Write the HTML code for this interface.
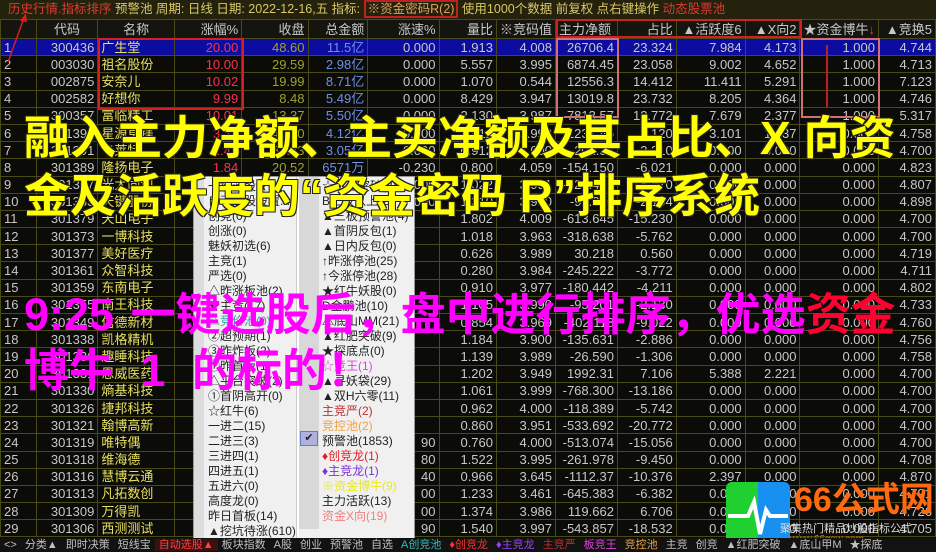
<!DOCTYPE html>
<html><head><meta charset="utf-8">
<style>
*{margin:0;padding:0;box-sizing:border-box}
body{width:936px;height:552px;overflow:hidden;background:#0b0b08;font-family:"Liberation Sans","Noto Sans CJK SC",sans-serif;position:relative}
.top{position:absolute;left:0;top:0;width:936px;height:19px;background:#24220c;color:#d8c868;font-size:12.5px;line-height:19px;white-space:nowrap;padding-left:8px}
.top .r{color:#e03a30}
table{position:absolute;left:0;top:19px;border-collapse:collapse;table-layout:fixed;font-size:13px;color:#c8c8c8}
td{height:17.2px;border:1px solid #4a4a18;padding:0 3px;text-align:right;white-space:nowrap;overflow:hidden;line-height:15px}
tr.h td{height:19px;background:#151510;color:#c8c8c8}
td.i{text-align:left;color:#c8c8c8}
td.n{text-align:left;color:#e8e060}
td.c{text-align:center}
tr.sel td{background:#0c0ca0}
.red{color:#ff3050}.yl{color:#a0a030}.bl{color:#7090e8}.cy{color:#30d0e0}
.menu{position:absolute;left:193px;top:176px;width:222px;height:364px;background:#f0f0f0;border:1px solid #999;font-size:12px;color:#222}
.menu .ls{position:absolute;left:0;top:0;width:10px;height:100%;background:#ddd}
.menu .div{position:absolute;left:102px;top:0;width:3px;height:100%;background:#fff;border-left:1px solid #ccc}
.menu .rs{position:absolute;left:105px;top:0;width:20px;height:352px;background:#d8d8d8}
.menu .col{position:absolute;top:2px;line-height:15px}
.ov{position:absolute;left:24px;font-weight:bold;white-space:nowrap;text-shadow:-1px -1px 0 #222,1px -1px 0 #222,-1px 1px 0 #222,1px 1px 0 #222}
.bot{position:absolute;left:0;top:538px;width:936px;height:14px;background:#121210;color:#c0c0c0;font-size:11px;line-height:14px;white-space:nowrap}
.bot span{padding:0 4px}
.box{position:absolute;border:2px solid #d02020}
</style></head><body>
<div class="top"><span class="r">历史行情.指标排序</span> 预警池 周期: 日线 日期: 2022-12-16,五 指标: <span style="color:#e0a060;border:2px solid #c02020;padding:0 2px">※资金密码R(2)</span> 使用1000个数据 前复权 点右键操作 <span class="r">动态股票池</span></div>
<table>
<colgroup><col style="width:36px"><col style="width:62px"><col style="width:77px"><col style="width:68px"><col style="width:67px"><col style="width:60px"><col style="width:72px"><col style="width:58px"><col style="width:56px"><col style="width:62px"><col style="width:59px"><col style="width:69px"><col style="width:55px"><col style="width:78px"><col style="width:57px"></colgroup>
<tr class="h"><td></td><td class="c">代码</td><td class="c">名称</td><td>涨幅%</td><td>收盘</td><td>总金额</td><td>涨速%</td><td>量比</td><td>※竞码值</td><td style="text-align:left">主力净额</td><td>占比</td><td>▲活跃度6</td><td>▲X向2</td><td>★资金博牛<span class="red">↓</span></td><td>▲竞换5</td></tr>
<tr class="sel"><td class="i">1</td><td>300436</td><td class="n cy">广生堂</td><td class="red">20.00</td><td class="yl">48.60</td><td class="bl">11.5亿</td><td>0.000</td><td>1.913</td><td>4.008</td><td>26706.4</td><td>23.324</td><td>7.984</td><td>4.173</td><td>1.000</td><td>4.744</td></tr>
<tr><td class="i">2</td><td>003030</td><td class="n">祖名股份</td><td class="red">10.00</td><td class="yl">29.59</td><td class="bl">2.98亿</td><td>0.000</td><td>5.557</td><td>3.995</td><td>6874.45</td><td>23.058</td><td>9.002</td><td>4.652</td><td>1.000</td><td>4.713</td></tr>
<tr><td class="i">3</td><td>002875</td><td class="n cy">安奈儿</td><td class="red">10.02</td><td class="yl">19.99</td><td class="bl">8.71亿</td><td>0.000</td><td>1.070</td><td>0.544</td><td>12556.3</td><td>14.412</td><td>11.411</td><td>5.291</td><td>1.000</td><td>7.123</td></tr>
<tr><td class="i">4</td><td>002582</td><td class="n">好想你</td><td class="red">9.99</td><td class="yl">8.48</td><td class="bl">5.49亿</td><td>0.000</td><td>8.429</td><td>3.947</td><td>13019.8</td><td>23.732</td><td>8.205</td><td>4.364</td><td>1.000</td><td>4.746</td></tr>
<tr><td class="i">5</td><td>300357</td><td class="n">富临精工</td><td class="red">10.01</td><td class="yl">13.37</td><td class="bl">5.50亿</td><td>0.000</td><td>2.130</td><td>3.987</td><td>7813.57</td><td>12.772</td><td>7.679</td><td>2.377</td><td>1.000</td><td>5.317</td></tr>
<tr><td class="i">6</td><td>301398</td><td class="n">星源卓镁</td><td class="red">3.21</td><td class="yl">40.20</td><td class="bl">4.12亿</td><td>0.000</td><td>1.412</td><td>3.992</td><td>1237.45</td><td>5.120</td><td>3.101</td><td>1.237</td><td>0.000</td><td>4.758</td></tr>
<tr><td class="i">7</td><td>301391</td><td class="n">卡莱特</td><td class="red">2.45</td><td class="yl">82.33</td><td class="bl">3.05亿</td><td>0.000</td><td>0.912</td><td>4.000</td><td>-201.37</td><td>-3.210</td><td>0.000</td><td>0.000</td><td>0.000</td><td>4.700</td></tr>
<tr><td class="i">8</td><td>301389</td><td class="n">隆扬电子</td><td class="red">1.84</td><td class="yl">20.52</td><td class="bl">6571万</td><td>-0.230</td><td>0.800</td><td>4.059</td><td>-154.150</td><td>-6.021</td><td>0.000</td><td>0.000</td><td>0.000</td><td>4.823</td></tr>
<tr><td class="i">9</td><td>301387</td><td class="n">光大同创</td><td class="red">1.20</td><td class="yl">52.10</td><td class="bl">1.02亿</td><td>0.000</td><td>1.022</td><td>3.991</td><td>-322.451</td><td>-8.470</td><td>0.000</td><td>0.000</td><td>0.000</td><td>4.807</td></tr>
<tr><td class="i">10</td><td>301383</td><td class="n">天键股份</td><td class="red">0.95</td><td class="yl">35.61</td><td class="bl">1.31亿</td><td>0.000</td><td>1.310</td><td>3.980</td><td>-98.330</td><td>-2.104</td><td>0.000</td><td>0.000</td><td>0.000</td><td>4.898</td></tr>
<tr><td class="i">11</td><td>301379</td><td class="n">天山电子</td><td></td><td></td><td></td><td></td><td>1.802</td><td>4.009</td><td>-613.645</td><td>-15.230</td><td>0.000</td><td>0.000</td><td>0.000</td><td>4.700</td></tr>
<tr><td class="i">12</td><td>301373</td><td class="n">一博科技</td><td></td><td></td><td></td><td></td><td>1.018</td><td>3.963</td><td>-318.638</td><td>-5.762</td><td>0.000</td><td>0.000</td><td>0.000</td><td>4.700</td></tr>
<tr><td class="i">13</td><td>301377</td><td class="n">美好医疗</td><td></td><td></td><td></td><td></td><td>0.626</td><td>3.989</td><td>30.218</td><td>0.560</td><td>0.000</td><td>0.000</td><td>0.000</td><td>4.719</td></tr>
<tr><td class="i">14</td><td>301361</td><td class="n">众智科技</td><td></td><td></td><td></td><td></td><td>0.280</td><td>3.984</td><td>-245.222</td><td>-3.772</td><td>0.000</td><td>0.000</td><td>0.000</td><td>4.711</td></tr>
<tr><td class="i">15</td><td>301359</td><td class="n">东南电子</td><td></td><td></td><td></td><td></td><td>0.910</td><td>3.977</td><td>-180.442</td><td>-4.211</td><td>0.000</td><td>0.000</td><td>0.000</td><td>4.802</td></tr>
<tr><td class="i">16</td><td>301355</td><td class="n">南王科技</td><td></td><td></td><td></td><td></td><td>1.105</td><td>3.990</td><td>-95.201</td><td>-2.130</td><td>0.000</td><td>0.000</td><td>0.000</td><td>4.733</td></tr>
<tr><td class="i">17</td><td>301349</td><td class="n">信德新材</td><td></td><td></td><td></td><td></td><td>0.854</td><td>3.969</td><td>-402.118</td><td>-9.022</td><td>0.000</td><td>0.000</td><td>0.000</td><td>4.760</td></tr>
<tr><td class="i">18</td><td>301338</td><td class="n">凯格精机</td><td></td><td></td><td></td><td></td><td>1.184</td><td>3.900</td><td>-135.631</td><td>-2.886</td><td>0.000</td><td>0.000</td><td>0.000</td><td>4.756</td></tr>
<tr><td class="i">19</td><td>301336</td><td class="n">趣睡科技</td><td></td><td></td><td></td><td></td><td>1.139</td><td>3.989</td><td>-26.590</td><td>-1.306</td><td>0.000</td><td>0.000</td><td>0.000</td><td>4.758</td></tr>
<tr><td class="i">20</td><td>301331</td><td class="n">恩威医药</td><td></td><td></td><td></td><td></td><td>1.202</td><td>3.949</td><td>1992.31</td><td>7.106</td><td>5.388</td><td>2.221</td><td>0.000</td><td>4.700</td></tr>
<tr><td class="i">21</td><td>301330</td><td class="n">熵基科技</td><td></td><td></td><td></td><td></td><td>1.061</td><td>3.999</td><td>-768.300</td><td>-13.186</td><td>0.000</td><td>0.000</td><td>0.000</td><td>4.700</td></tr>
<tr><td class="i">22</td><td>301326</td><td class="n">捷邦科技</td><td></td><td></td><td></td><td></td><td>0.962</td><td>4.000</td><td>-118.389</td><td>-5.742</td><td>0.000</td><td>0.000</td><td>0.000</td><td>4.700</td></tr>
<tr><td class="i">23</td><td>301321</td><td class="n">翰博高新</td><td></td><td></td><td></td><td></td><td>0.860</td><td>3.951</td><td>-533.692</td><td>-20.772</td><td>0.000</td><td>0.000</td><td>0.000</td><td>4.700</td></tr>
<tr><td class="i">24</td><td>301319</td><td class="n">唯特偶</td><td></td><td></td><td></td><td>90</td><td>0.760</td><td>4.000</td><td>-513.074</td><td>-15.056</td><td>0.000</td><td>0.000</td><td>0.000</td><td>4.700</td></tr>
<tr><td class="i">25</td><td>301318</td><td class="n">维海德</td><td></td><td></td><td></td><td>80</td><td>1.522</td><td>3.995</td><td>-261.978</td><td>-9.450</td><td>0.000</td><td>0.000</td><td>0.000</td><td>4.708</td></tr>
<tr><td class="i">26</td><td>301316</td><td class="n">慧博云通</td><td></td><td></td><td></td><td>40</td><td>0.966</td><td>3.645</td><td>-1112.37</td><td>-10.376</td><td>2.397</td><td>0.000</td><td>0.000</td><td>4.870</td></tr>
<tr><td class="i">27</td><td>301313</td><td class="n">凡拓数创</td><td></td><td></td><td></td><td>00</td><td>1.233</td><td>3.461</td><td>-645.383</td><td>-6.382</td><td>0.000</td><td>0.000</td><td>0.000</td><td>4.791</td></tr>
<tr><td class="i">28</td><td>301309</td><td class="n">万得凯</td><td></td><td></td><td></td><td>00</td><td>1.374</td><td>3.986</td><td>119.662</td><td>6.706</td><td>0.000</td><td>0.000</td><td>0.000</td><td>4.726</td></tr>
<tr><td class="i">29</td><td>301306</td><td class="n">西测测试</td><td></td><td></td><td></td><td>90</td><td>1.540</td><td>3.997</td><td>-543.857</td><td>-18.532</td><td>0.000</td><td>0.000</td><td>0.000</td><td>4.705</td></tr>
</table>

<div class="box" style="left:98px;top:38px;width:146px;height:72px"></div>
<div class="box" style="left:556px;top:19px;width:246px;height:19px"></div>
<div class="box" style="left:556px;top:38px;width:63px;height:80px;border-color:#d07070"></div>
<div class="box" style="left:801px;top:38px;width:79px;height:80px;border-color:#d07070"></div>
<div style="position:absolute;left:826px;top:45px;width:2px;height:62px;background:#c02020"></div>
<svg style="position:absolute;left:0;top:0" width="40" height="70"><line x1="8" y1="62" x2="24" y2="18" stroke="#d02020" stroke-width="1.5"/><polygon points="26,13 20,21 27,22" fill="#d02020"/></svg>

<div class="menu">
<div class="ls"></div><div class="div"></div><div class="rs"></div>
<div class="col" style="left:14px">一键选股★<br>自动选股设置...<br>创竞(0)<br>创涨(0)<br>魅妖初选(6)<br>主竞(1)<br>严选(0)<br>△昨涨板池(2)<br>★主竞(17)<br><span style="color:#30a0a0">△竞价池(0)</span><br>②超预期(1)<br>③昨炸板(2)<br>①昨首板(1)<br>△平台突破(2)<br>①首阴高开(0)<br>☆红牛(6)<br>一进二(15)<br>二进三(3)<br>三进四(1)<br>四进五(1)<br>五进六(0)<br>高度龙(0)<br>昨日首板(14)<br>▲挖坑待涨(610)</div>
<div class="col" style="left:128px">☆坑后突破(3)<br>B三板以上(2)<br>▲三板预警池(4)<br>▲首阴反包(1)<br>▲日内反包(0)<br>↑昨涨停池(25)<br>↑今涨停池(28)<br>★红牛妖股(0)<br>D金鹏池(10)<br>△底山MM(21)<br>▲红肥突破(9)<br>★探底点(0)<br><span style="color:#e040e0">☆竞王(1)</span><br>▲寻妖袋(29)<br>▲双H六零(11)<br><span style="color:#c03030">主竞严(2)</span><br><span style="color:#f0a040">竞控池(2)</span><br>预警池(1853)<br><span style="color:#e02020">♦创竞龙(1)</span><br><span style="color:#8030e0">♦主竞龙(1)</span><br><span style="color:#e8e820">※资金博牛(9)</span><br>主力活跃(13)<br><span style="color:#f08080">资金X向(19)</span></div>
<div style="position:absolute;left:106px;top:254px;width:18px;height:15px;background:#b0b0e0;border:1px solid #6080c0;font-size:11px;text-align:center;line-height:13px">✔</div>
</div>

<div class="ov" style="top:102px;font-size:46px;color:#ffff00">融入主力净额、主买净额及其占比、X 向资</div>
<div class="ov" style="top:160px;font-size:46px;color:#ffff00">金及活跃度的“资金密码 R”排序系统</div>
<div class="ov" style="top:278px;font-size:45px;color:#ff00ff;text-shadow:none;word-spacing:4px">9:25 一键选股后，盘中进行排序，优选<span style="color:#ff0030">资金</span></div>
<div class="ov" style="top:334px;font-size:45px;color:#ff00ff;text-shadow:none;word-spacing:14px">博牛 1 的标的！</div>

<div style="position:absolute;left:726px;top:482px;width:64px;height:62px;border-radius:6px;background:linear-gradient(90deg,#20d030 50%,#1890f0 50%)">
<svg width="64" height="62"><polyline points="2,34 22,34 28,20 34,52 40,28 44,34 62,34" fill="none" stroke="#fff" stroke-width="4"/></svg></div>
<div style="position:absolute;left:794px;top:480px;font-size:34px;font-weight:bold;color:#ff6a10;line-height:40px">66公式网</div>
<div style="position:absolute;left:780px;top:520px;font-size:11px;color:#ddd">聚集热门精品炒股指标公式</div>
<div style="position:absolute;left:790px;top:534px;font-size:10px;color:#ff6a10">www.66gsw.com</div>

<div class="bot"><span>&lt;&gt;</span><span>分类▲</span><span>即时决策</span><span>短线宝</span><span style="background:#3a1010;color:#ff4040">自动选股▲</span><span>板块指数</span><span>A股</span><span>创业</span><span>预警池</span><span>自选</span><span style="color:#30c0c0">A创竞池</span><span style="color:#ff3030">♦创竞龙</span><span style="color:#a040ff">♦主竞龙</span><span style="color:#c03030">主竞严</span><span style="color:#e040e0">板竞王</span><span style="color:#f0a040">竞控池</span><span>主竞</span><span>创竞</span><span>▲红肥突破</span><span>▲底山甲M</span><span>★探底</span></div>
</body></html>
